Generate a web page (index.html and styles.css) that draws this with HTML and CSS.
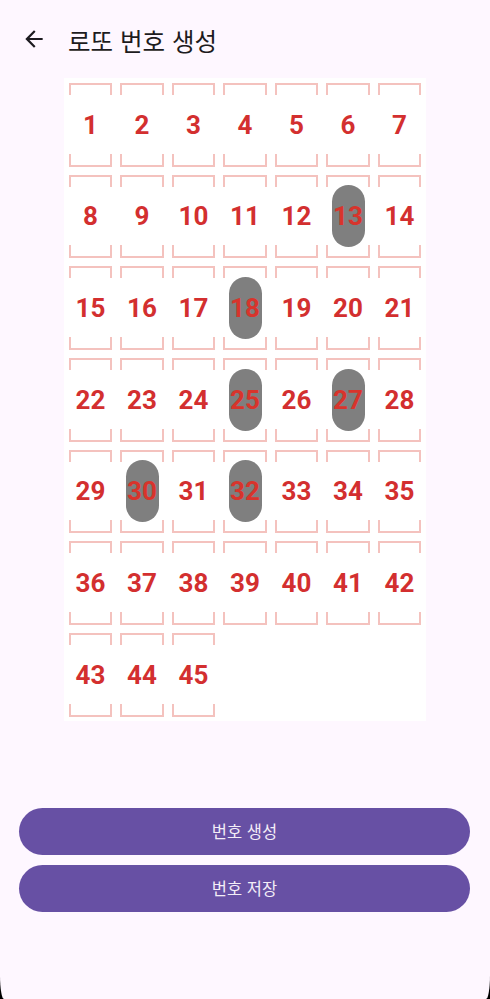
FILE: index.html
```html
<!DOCTYPE html>
<html lang="ko">
<head>
<meta charset="utf-8">
<title>로또 번호 생성</title>
<link rel="stylesheet" href="styles.css">
</head>
<body>
<div class="screen">
  <header class="topbar">
    <svg class="back" viewBox="0 0 24 24" width="26" height="26" aria-hidden="true">
      <path d="M20 11H7.83l5.59-5.59L12 4l-8 8 8 8 1.41-1.41L7.83 13H20v-2z" fill="#1d1b20"/>
    </svg>
    <h1 class="title">로또 번호 생성</h1>
  </header>

  <main class="board">
    <div class="grid">
      <div class="cell"><span class="num">1</span></div>
      <div class="cell"><span class="num">2</span></div>
      <div class="cell"><span class="num">3</span></div>
      <div class="cell"><span class="num">4</span></div>
      <div class="cell"><span class="num">5</span></div>
      <div class="cell"><span class="num">6</span></div>
      <div class="cell"><span class="num">7</span></div>
      <div class="cell"><span class="num">8</span></div>
      <div class="cell"><span class="num">9</span></div>
      <div class="cell"><span class="num">10</span></div>
      <div class="cell"><span class="num">11</span></div>
      <div class="cell"><span class="num">12</span></div>
      <div class="cell"><span class="num picked">13</span></div>
      <div class="cell"><span class="num">14</span></div>
      <div class="cell"><span class="num">15</span></div>
      <div class="cell"><span class="num">16</span></div>
      <div class="cell"><span class="num">17</span></div>
      <div class="cell"><span class="num picked">18</span></div>
      <div class="cell"><span class="num">19</span></div>
      <div class="cell"><span class="num">20</span></div>
      <div class="cell"><span class="num">21</span></div>
      <div class="cell"><span class="num">22</span></div>
      <div class="cell"><span class="num">23</span></div>
      <div class="cell"><span class="num">24</span></div>
      <div class="cell"><span class="num picked">25</span></div>
      <div class="cell"><span class="num">26</span></div>
      <div class="cell"><span class="num picked">27</span></div>
      <div class="cell"><span class="num">28</span></div>
      <div class="cell"><span class="num">29</span></div>
      <div class="cell"><span class="num picked">30</span></div>
      <div class="cell"><span class="num">31</span></div>
      <div class="cell"><span class="num picked">32</span></div>
      <div class="cell"><span class="num">33</span></div>
      <div class="cell"><span class="num">34</span></div>
      <div class="cell"><span class="num">35</span></div>
      <div class="cell"><span class="num">36</span></div>
      <div class="cell"><span class="num">37</span></div>
      <div class="cell"><span class="num">38</span></div>
      <div class="cell"><span class="num">39</span></div>
      <div class="cell"><span class="num">40</span></div>
      <div class="cell"><span class="num">41</span></div>
      <div class="cell"><span class="num">42</span></div>
      <div class="cell"><span class="num">43</span></div>
      <div class="cell"><span class="num">44</span></div>
      <div class="cell"><span class="num">45</span></div>
    </div>
  </main>

  <div class="actions">
    <button class="btn" type="button">번호 생성</button>
    <button class="btn" type="button">번호 저장</button>
  </div>
</div>
</body>
</html>
```

FILE: styles.css
```css
* { box-sizing: border-box; }

html, body {
  margin: 0;
  padding: 0;
  background: #000;
}

.screen {
  width: 490px;
  height: 999px;
  background: #fef7ff;
  border-bottom-left-radius: 4px 24px;
  border-bottom-right-radius: 4px 24px;
  overflow: hidden;
  display: flex;
  flex-direction: column;
  font-family: "Noto Sans CJK KR", "Noto Sans", Roboto, sans-serif;
}

.topbar {
  height: 78px;
  display: flex;
  align-items: center;
  padding-left: 21px;
  gap: 21px;
}

.back {
  display: block;
  flex: none;
}

.title {
  margin: 0;
  font-size: 24.5px;
  font-weight: 400;
  color: #1d1b20;
  line-height: 1;
  position: relative;
  top: 2px;
}

.board {
  display: flex;
  justify-content: center;
}

.grid {
  background: #ffffff;
  padding: 5px 5px 4px 5px;
  display: grid;
  grid-template-columns: repeat(7, 43.5px);
  grid-auto-rows: 83.67px;
  column-gap: 8px;
  row-gap: 8px;
}

.cell {
  --ln: #f4c2be;
  display: flex;
  align-items: center;
  justify-content: center;
  background:
    linear-gradient(var(--ln), var(--ln)) left top / 100% 2px no-repeat,
    linear-gradient(var(--ln), var(--ln)) left bottom / 100% 2px no-repeat,
    linear-gradient(var(--ln), var(--ln)) left top / 2px 12px no-repeat,
    linear-gradient(var(--ln), var(--ln)) right top / 2px 12px no-repeat,
    linear-gradient(var(--ln), var(--ln)) left bottom / 2px 13px no-repeat,
    linear-gradient(var(--ln), var(--ln)) right bottom / 2px 13px no-repeat;
}

.num {
  font-family: Roboto, "Liberation Sans", sans-serif;
  font-weight: 700;
  font-size: 26px;
  line-height: 1;
  color: #d32f2f;
  display: flex;
  align-items: center;
  justify-content: center;
  width: 33px;
  height: 62px;
  white-space: nowrap;
}

.num.picked {
  background: #7f7f7f;
  border-radius: 16.5px;
  color: #d8342c;
}

.actions {
  margin-top: 87px;
  padding: 0 20px 0 19px;
  display: flex;
  flex-direction: column;
  gap: 10px;
}

.btn {
  height: 47px;
  border: 0;
  border-radius: 24px;
  background: #6750a4;
  color: #f3edf7;
  font-family: "Noto Sans CJK KR", "Noto Sans", sans-serif;
  font-size: 16.5px;
  font-weight: 400;
  padding: 0;
  cursor: pointer;
}
```
